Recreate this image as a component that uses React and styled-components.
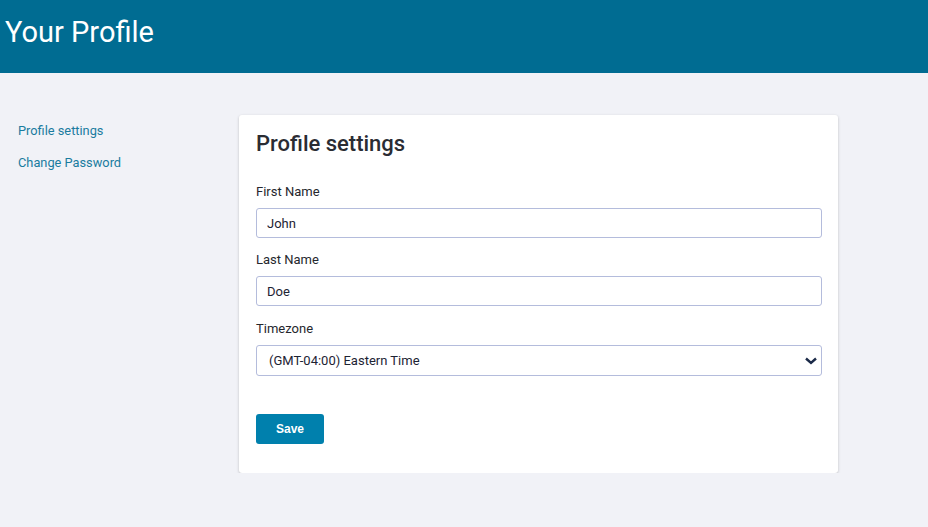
import React, { useState } from "react";
import styled, { createGlobalStyle } from "styled-components";

const GlobalStyle = createGlobalStyle`
  html, body {
    margin: 0;
    padding: 0;
    background: #f1f2f7;
    font-family: Roboto, "Liberation Sans", Arial, sans-serif;
    color: #212529;
  }
  * { box-sizing: border-box; }
`;

const Header = styled.header`
  height: 73px;
  background: #006c92;
  padding: 0 5px;
  display: flex;
  align-items: center;
  padding-bottom: 10px;
`;

const Title = styled.h1`
  margin: 0;
  font-size: 29px;
  font-weight: 400;
  color: #ffffff;
`;

const Layout = styled.div`
  display: grid;
  grid-template-columns: 239px 599px;
  padding-top: 42px;
`;

const Sidebar = styled.nav`
  display: flex;
  flex-direction: column;
  gap: 14px;
  padding: 7px 0 0 18px;
`;

const NavLink = styled.a`
  font-size: 12.8px;
  color: #1a7c9f;
  text-decoration: none;
  line-height: 18px;
  cursor: pointer;
`;

const Card = styled.section`
  background: #ffffff;
  border-radius: 3px;
  box-shadow: 0 1px 3px rgba(0, 0, 0, 0.22);
  padding: 16px 16px 29px 17px;
`;

const CardTitle = styled.h2`
  margin: 0 0 26px;
  font-size: 22px;
  font-weight: 500;
  line-height: 26px;
  color: #2a2c33;
`;

const Field = styled.div`
  display: flex;
  flex-direction: column;
  margin-bottom: ${(p) => p.$gap || 13}px;
`;

const Label = styled.label`
  font-size: 13px;
  line-height: 17px;
  color: #25272d;
  margin-bottom: 8px;
`;

const Input = styled.input`
  height: 30px;
  border: 1px solid #b4bcdc;
  border-radius: 3px;
  padding: 0 10px;
  font-family: Roboto, "Liberation Sans", Arial, sans-serif;
  font-size: 13px;
  color: #1d2333;
  outline: none;
`;

const SelectWrap = styled.div`
  position: relative;
`;

const Select = styled.select`
  width: 100%;
  height: 31px;
  border: 1px solid #b4bcdc;
  border-radius: 3px;
  padding: 0 30px 0 12px;
  font-family: Roboto, "Liberation Sans", Arial, sans-serif;
  font-size: 13px;
  color: #1d2333;
  background: #ffffff;
  appearance: none;
  outline: none;
`;

const Chevron = styled.svg`
  position: absolute;
  right: 4px;
  top: 11px;
  pointer-events: none;
`;

const SaveButton = styled.button`
  width: 68px;
  height: 30px;
  border: none;
  border-radius: 3px;
  background: #0080ad;
  color: #ffffff;
  font-family: "Liberation Sans", Arial, sans-serif;
  font-weight: 700;
  font-size: 12px;
  cursor: pointer;
`;

export default function App() {
  const [first, setFirst] = useState("John");
  const [last, setLast] = useState("Doe");
  const [tz, setTz] = useState("eastern");

  return (
    <>
      <GlobalStyle />
      <Header>
        <Title>Your Profile</Title>
      </Header>
      <Layout>
        <Sidebar>
          <NavLink>Profile settings</NavLink>
          <NavLink>Change Password</NavLink>
        </Sidebar>
        <Card>
          <CardTitle>Profile settings</CardTitle>
          <Field>
            <Label>First Name</Label>
            <Input value={first} onChange={(e) => setFirst(e.target.value)} />
          </Field>
          <Field $gap={14}>
            <Label>Last Name</Label>
            <Input value={last} onChange={(e) => setLast(e.target.value)} />
          </Field>
          <Field $gap={38}>
            <Label>Timezone</Label>
            <SelectWrap>
              <Select value={tz} onChange={(e) => setTz(e.target.value)}>
                <option value="eastern">(GMT-04:00) Eastern Time</option>
                <option value="central">(GMT-05:00) Central Time</option>
                <option value="pacific">(GMT-07:00) Pacific Time</option>
              </Select>
              <Chevron width="14" height="10" viewBox="0 0 14 10">
                <path d="M2 2.5 L7 7 L12 2.5" fill="none" stroke="#1b2a48" strokeWidth="2.4" />
              </Chevron>
            </SelectWrap>
          </Field>
          <SaveButton>Save</SaveButton>
        </Card>
      </Layout>
    </>
  );
}
